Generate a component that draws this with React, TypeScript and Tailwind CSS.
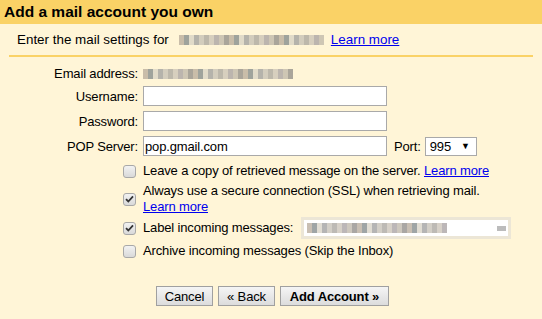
import React from "react";

function Blur({ w, className = "" }: { w: number; className?: string }) {
  // pixelated, blurred address stand-in
  const colors = ["#b7a99a", "#9c9c9c", "#c9c2b5", "#8e8a86", "#d7d1c4", "#a7a39c", "#bdb6a8", "#7f8788", "#c4bfb4", "#a59fa0"];
  const cells = Math.floor(w / 5);
  return (
    <span className={"inline-flex h-[10px] align-middle " + className} style={{ width: w }}>
      {Array.from({ length: cells }).map((_, i) => (
        <span key={i} className="h-full w-[5px]" style={{ background: colors[(i * 7) % colors.length], opacity: 0.75 }} />
      ))}
    </span>
  );
}

function Check({ checked }: { checked?: boolean }) {
  return (
    <span className="flex size-[13px] shrink-0 items-center justify-center rounded-[3px] border border-[#a8a8a8] bg-gradient-to-b from-[#f2f2f2] to-[#d9d9d9]">
      {checked && (
        <svg width="9" height="8" viewBox="0 0 9 8">
          <path d="M1 4.2 3.3 6.5 8 1.3" fill="none" stroke="#333" strokeWidth="1.8" />
        </svg>
      )}
    </span>
  );
}

export default function App() {
  return (
    <div className="h-[319px] w-[542px] bg-[#fff5d7] font-['Liberation_Sans',Arial,sans-serif] text-[13px] tracking-[-0.15px] text-black">
      <div className="flex h-[24px] items-center bg-[#fad266] px-[4px] text-[15.5px] font-bold tracking-normal">
        Add a mail account you own
      </div>

      <div className="mx-[9px] mt-[8px] flex h-[25px] items-start border-b-2 border-[#fad266] pl-[8px] text-[13.4px] leading-[15px] tracking-normal">
        <span>Enter the mail settings for</span>
        <Blur w={146} className="ml-[10px] mt-[3px]" />
        <a className="ml-[6px] text-[#0000ee] underline">Learn more</a>
      </div>

      <div className="mt-[9px] grid grid-cols-[138px_auto] items-center gap-x-[5px] gap-y-[5px] leading-[15px]">
        <div className="h-[15px] text-right">Email address:</div>
        <div className="flex h-[15px] items-center">
          <Blur w={152} />
        </div>

        <div className="text-right">Username:</div>
        <input className="h-[20px] w-[244px] border border-[#a9a9a9] bg-white" />

        <div className="text-right">Password:</div>
        <input type="password" className="h-[20px] w-[244px] border border-[#a9a9a9] bg-white" />

        <div className="text-right">POP Server:</div>
        <div className="flex items-center">
          <input
            defaultValue="pop.gmail.com"
            className="h-[20px] w-[244px] border border-[#a9a9a9] bg-white px-[1px] text-[13px]"
          />
          <span className="ml-[7px]">Port:</span>
          <span className="ml-[4px] flex h-[19px] w-[52px] items-center justify-between border border-[#a9a9a9] bg-white pl-[4px] pr-[6px]">
            995
            <span className="text-[9px]">▼</span>
          </span>
        </div>
      </div>

      <div className="mt-[7px] ml-[123px] flex flex-col leading-[16px]">
        <div className="flex h-[16px] items-center gap-[7px]">
          <Check />
          <span>
            Leave a copy of retrieved message on the server.{" "}
            <a className="text-[#0000ee] underline">Learn more</a>
          </span>
        </div>
        <div className="mt-[4px] flex items-center gap-[7px]">
          <Check checked />
          <span>
            Always use a secure connection (SSL) when retrieving mail.
            <br />
            <a className="text-[#0000ee] underline">Learn more</a>
          </span>
        </div>
        <div className="mt-[2px] flex h-[22px] items-center gap-[7px]">
          <Check checked />
          <span>Label incoming messages:</span>
          <span className="ml-[1px] flex h-[22px] w-[210px] items-center bg-[#ece6d6] px-[3px]">
            <span className="flex h-[16px] flex-1 items-center bg-white pl-[3px]">
              <Blur w={140} />
              <span className="ml-auto mr-[2px] h-[5px] w-[9px] bg-[#bcbcbc]" />
            </span>
          </span>
        </div>
        <div className="mt-[4px] flex h-[16px] items-center gap-[7px]">
          <Check />
          <span>Archive incoming messages (Skip the Inbox)</span>
        </div>
      </div>

      <div className="mt-[27px] ml-[156px] flex gap-[5px]">
        <button className="h-[20px] w-[57px] border border-[#a0a0a0] bg-gradient-to-b from-[#f5f5f5] to-[#dcdcdc]">
          Cancel
        </button>
        <button className="h-[20px] w-[57px] border border-[#a0a0a0] bg-gradient-to-b from-[#f5f5f5] to-[#dcdcdc]">
          « Back
        </button>
        <button className="h-[20px] w-[109px] border border-[#a0a0a0] bg-gradient-to-b from-[#f5f5f5] to-[#dcdcdc] font-bold">
          Add Account »
        </button>
      </div>
    </div>
  );
}
